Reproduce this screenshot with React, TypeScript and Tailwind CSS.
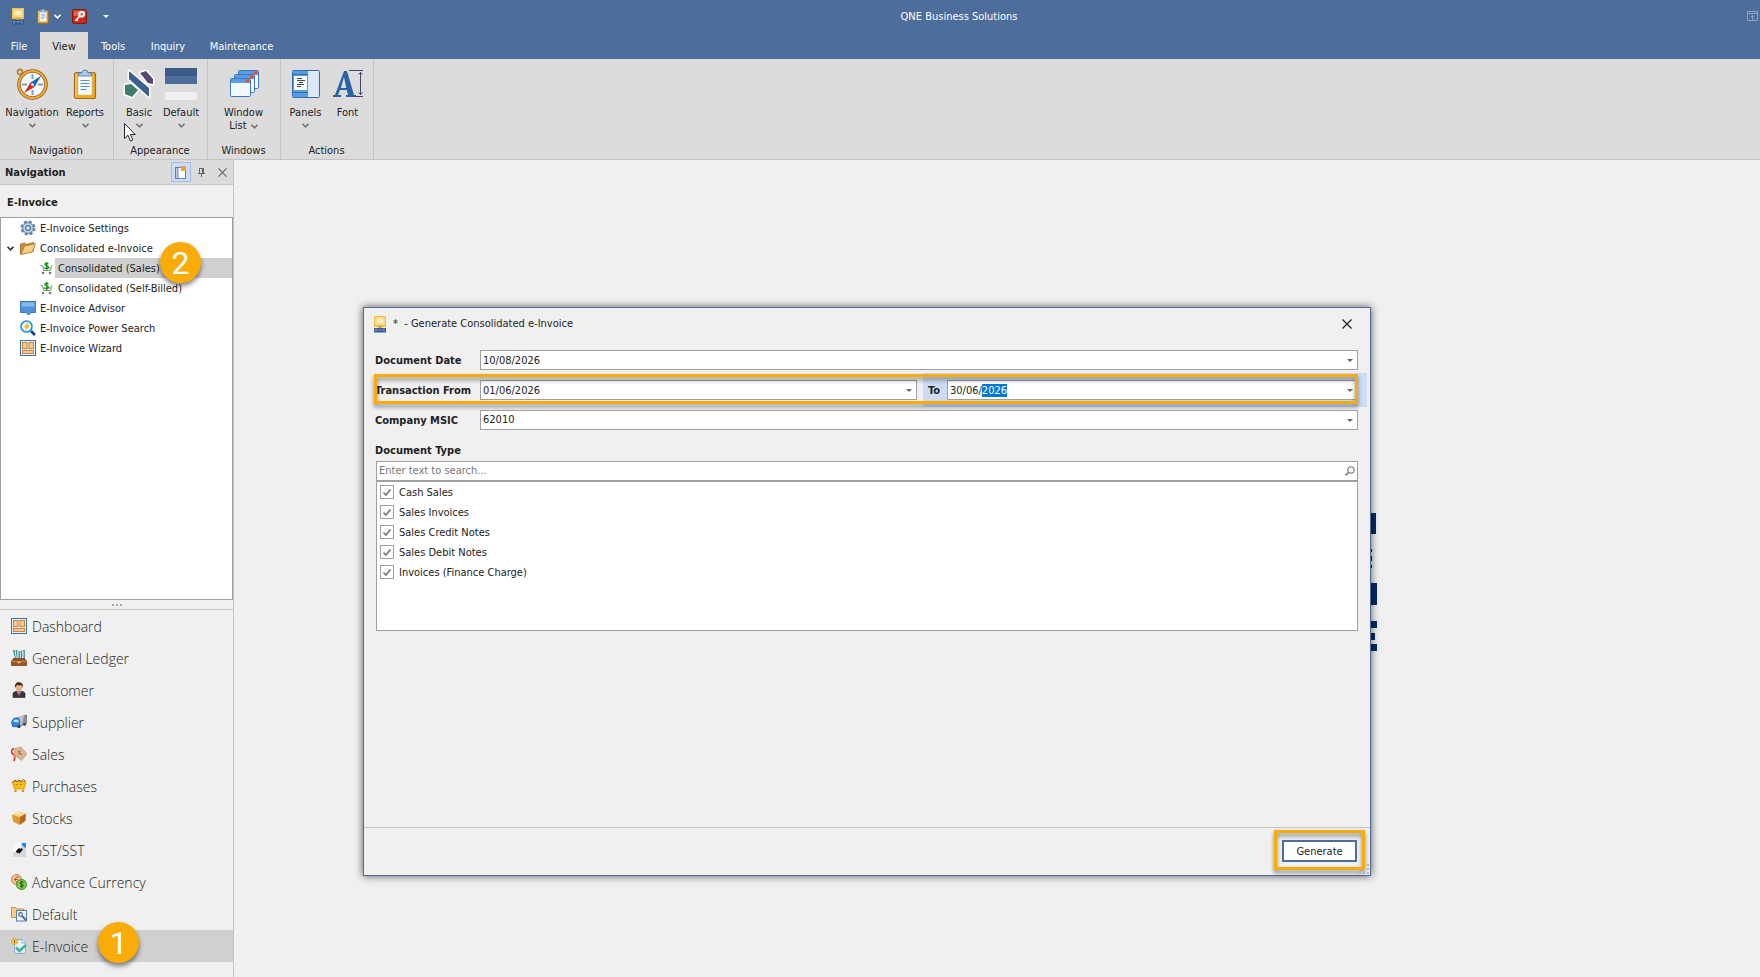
import { type FC, type ReactNode, useEffect, useRef, useState } from 'react';

interface IconProps {
  className?: string;
}

/* ---------- small glyphs ---------- */

const Chevron: FC<IconProps> = ({ className }) => (
  <svg viewBox="0 0 7 5" className={`w-[7px] h-[5px] ${className ?? ''}`} fill="none" stroke="currentColor" strokeWidth="1.6">
    <path d="M0.5 0.8 L3.5 3.8 L6.5 0.8" />
  </svg>
);

const Caret: FC<IconProps> = ({ className }) => (
  <svg viewBox="0 0 6 3" className={`w-[6px] h-[3px] ${className ?? ''}`} fill="currentColor">
    <path d="M0 0 H6 L3 3 Z" />
  </svg>
);

const CloseGlyph: FC<IconProps> = ({ className }) => (
  <svg viewBox="0 0 10 10" className={className} fill="none" stroke="currentColor" strokeWidth="1.3">
    <path d="M0.5 0.5 L9.5 9.5 M9.5 0.5 L0.5 9.5" />
  </svg>
);

const AppIcon: FC<IconProps> = ({ className }) => (
  <svg viewBox="0 0 13 17" className={`w-[13px] h-[17px] ${className ?? ''}`}>
    <rect x="0" y="0" width="12" height="11" fill="#eec04b" />
    <rect x="1" y="1" width="10" height="8" fill="#f8dc84" />
    <rect x="3" y="3" width="6" height="4" fill="#fdf0be" />
    <rect x="4.5" y="10" width="3" height="2" fill="#d59a2c" />
    <rect x="0" y="12" width="12" height="4.5" fill="#31568f" />
    <path d="M1 13h2v2H1zM5 15v-2l2 2v-2M11 13H9v2h2" fill="none" stroke="#8aa2c8" strokeWidth="0.7" />
  </svg>
);

const ClipboardIcon: FC<IconProps> = ({ className }) => (
  <svg viewBox="0 0 24 32" className={className}>
    <rect x="1.5" y="4.5" width="21" height="26" rx="2" fill="#f0a91c" stroke="#a8681a" strokeWidth="1.2" />
    <path d="M3 6v23" stroke="#ffd977" />
    <rect x="5" y="7" width="14" height="20" fill="#f7fbff" stroke="#d9c089" strokeWidth="0.6" />
    <path d="M5.5 8V5h3.500a3 3 0 0 1 6 0h3.500v3z" fill="#a9c9ec" stroke="#5d87b7" />
    <path d="M7.5 12.500h9M7.500 15.500h9M7.500 18.500h9M7.500 21.500h6" stroke="#5b8fd0" strokeWidth="1.200" />
  </svg>
);

const KeyIcon: FC = () => (
  <svg viewBox="0 0 14 14" className="size-[15px]">
    <rect x="0.500" y="0.500" width="13" height="13" rx="2" fill="#cb2a1c" stroke="#8d160d" />
    <rect x="1.500" y="1.500" width="11" height="5" fill="#e0624f" />
    <circle cx="9" cy="5" r="2.200" fill="none" stroke="#fff" strokeWidth="1.800" />
    <path d="M7.500 6.500 L3 11 M4 9.500 L5.500 11" stroke="#fff" strokeWidth="1.500" />
  </svg>
);

/* ---------- ribbon icons ---------- */

const CompassIcon: FC = () => (
  <svg viewBox="0 0 32 32" className="size-8">
    <circle cx="4" cy="4" r="2.500" fill="none" stroke="#b98136" strokeWidth="1.800" />
    <circle cx="16.500" cy="16.500" r="13.500" fill="#f3f9fd" stroke="#9a611a" strokeWidth="3.600" />
    <circle cx="16.500" cy="16.500" r="13.500" fill="none" stroke="#edaa3c" strokeWidth="2" />
    <path d="M16.500 6v5M16.500 22v5M6 16.500h5M22 16.500h5" stroke="#7ba0bd" strokeWidth="2" />
    <path d="M25 8 L18.500 19 L14.500 14.500 Z" fill="#1f5fae" />
    <path d="M8 25 L14.500 14.500 L18.500 19 Z" fill="#d8281e" />
    <circle cx="16.500" cy="16.500" r="1.500" fill="#e8eef5" />
  </svg>
);

const BasicSkinIcon: FC = () => (
  <svg viewBox="0 0 32 32" className="size-8">
    <g stroke="#fff" strokeWidth="3" strokeLinejoin="round">
      <path d="M17 5 L23 3 L30 11 L30 16 L25 15 Z" fill="#5b4678" />
      <path d="M2 17 L8 16 L15 22 L9 29 L2 26 Z" fill="#3f7d66" />
      <path d="M6 3 L26 20 L26 29 L6 11 Z" fill="#3b5f90" />
    </g>
    <path d="M17 5 L23 3 L30 11 L30 16 L25 15 Z" fill="#5b4678" />
    <path d="M2 17 L8 16 L15 22 L9 29 L2 26 Z" fill="#3f7d66" />
    <path d="M6 3 L26 20 L26 29 L6 11 Z" fill="#3b5f90" />
  </svg>
);

const DefaultSkinIcon: FC = () => (
  <svg viewBox="0 0 32 32" className="size-8">
    <rect width="32" height="8" fill="#3c5a86" />
    <rect y="8" width="32" height="8" fill="#4d6d9c" />
    <rect y="16" width="32" height="8" fill="#dcdcdc" />
    <rect y="24" width="32" height="8" fill="#f0f0f0" />
  </svg>
);

const WindowListIcon: FC = () => (
  <svg viewBox="0 0 32 32" className="size-8">
    {[
      [10, 2],
      [6, 6],
      [2, 10],
    ].map(([x, y]) => (
      <g key={x}>
        <rect x={x + 0.5} y={y + 0.5} width="20" height="18" rx="1" fill="#f3f8fd" stroke="#3c78bd" />
        <rect x={x + 1} y={y + 1} width="19" height="4" fill="#5c9ce0" />
        <rect x={x + 16} y={y + 1.5} width="3" height="2.500" fill="#e6472a" />
      </g>
    ))}
  </svg>
);

const PanelsIcon: FC = () => (
  <svg viewBox="0 0 32 32" className="size-8">
    <rect x="2.500" y="2.500" width="27" height="27" rx="1" fill="#dbe8f8" stroke="#2e6db5" />
    <rect x="3" y="3" width="15" height="26" fill="#5a9be0" />
    <path d="M3 6.500h15M3 24.500h15" stroke="#2e6db5" />
    <rect x="4" y="8" width="13" height="14" fill="#f7fbff" />
    <path d="M7 10.500h5M7 12.500h8M9 14.500h4M7 16.500h7M7 18.500h4" stroke="#3d4b5c" />
  </svg>
);

const FontIcon: FC = () => (
  <svg viewBox="0 0 32 32" className="size-8">
    <path
      d="M12 3 H15 L22 27 H24 V29 H14 V27 H16 L14.800 22 H8 L6 27 H9 V29 H1 V27 H3 Z M12 9 L8.800 20 H14.300 Z"
      fill="#2a62a3"
      fillRule="evenodd"
    />
    <path d="M17 2.500h14M22 28.500h9M28.500 4v23M26.500 6.500l2-2 2 2M26.500 24.500l2 2 2-2" fill="none" stroke="#44446b" />
  </svg>
);

/* ---------- tree and module icons, 16px grid ---------- */

const Svg16: FC<{ children: ReactNode }> = ({ children }) => (
  <svg viewBox="0 0 16 16" className="size-4 shrink-0">
    {children}
  </svg>
);

const GearIcon = () => (
  <Svg16>
    <circle cx="8" cy="8" r="6.200" fill="none" stroke="#6686a6" strokeWidth="2.600" strokeDasharray="3 1.870" />
    <circle cx="8" cy="8" r="5.400" fill="#b8d2ea" stroke="#58789a" strokeWidth="0.900" />
    <circle cx="8" cy="8" r="2.300" fill="#f2f7fb" stroke="#416b99" strokeWidth="1.300" />
  </Svg16>
);

const FolderIcon = () => (
  <Svg16>
    <path d="M0.500 14V4l4-1 2 1.500 7-2V11z" fill="#c98f3f" stroke="#96601e" strokeWidth="0.800" />
    <path d="M1 14.500L4.500 6 15.500 3.500 12.500 12z" fill="#f6cf87" stroke="#ab742a" strokeWidth="0.800" />
  </Svg16>
);

const CartIcon = () => (
  <svg viewBox="0 0 13 13" className="size-[13px] shrink-0">
    <path d="M0.500 3.500h2l1 5h7l1-4M11 4.500l1.500-1.500M3 6h8" fill="none" stroke="#8a8a8a" />
    <circle cx="3" cy="11" r="1.300" fill="#777" />
    <circle cx="10" cy="11" r="1.300" fill="#777" />
    <path d="M8.500 1.800C6.500 0.800 4.500 1.500 5 2.800s3.500 1 3.500 2.500-2.500 1.800-4 0.700M6.700 0v8" fill="none" stroke="#0d9a18" strokeWidth="1.300" />
  </svg>
);

const AdvisorIcon = () => (
  <Svg16>
    <path d="M0.500 1.500h15v11h-4.500l-2.500 2.500-2.500-2.500H0.500z" fill="#4f94d8" stroke="#3b78b5" />
    <rect x="1.500" y="2.500" width="13" height="4" fill="#88bbea" />
  </Svg16>
);

const PowerSearchIcon = () => (
  <Svg16>
    <circle cx="6.500" cy="6.500" r="5.500" fill="#f5fbff" stroke="#1595dd" strokeWidth="1.600" />
    <path d="M8.500 2L3.500 7.500h2.500L5 11l5-5.500H7.500z" fill="#f7b512" />
    <path d="M11 11l4 4" stroke="#143f96" strokeWidth="2.600" />
  </Svg16>
);

const DashboardIcon = () => (
  <Svg16>
    <rect x="0.500" y="0.500" width="15" height="15" fill="#e7eff8" stroke="#3f719f" />
    <g fill="#f6cc92" stroke="#cd813b">
      <rect x="2.500" y="2.500" width="4.500" height="6" />
      <rect x="9" y="2.500" width="4.500" height="6" />
      <rect x="2.500" y="10.500" width="11" height="3" />
    </g>
  </Svg16>
);

const LedgerIcon = () => (
  <Svg16>
    <path d="M3 1l2 8M5.500 0l0.500 9M8 1v8M10.500 0.500v8M13 0v9" stroke="#3f9296" strokeWidth="1.700" />
    <path d="M4 1l1.500 8M7 1v7M12 1v8" stroke="#d8e6ef" />
    <path d="M2 0h2v2H2z" fill="#63ad42" />
    <path d="M0.500 15.500v-4l2-3h11l2 3v4z" fill="#9b5425" stroke="#6e3714" strokeWidth="0.700" />
    <path d="M1 11.500h14" stroke="#cb844c" />
    <rect x="6.500" y="12" width="3" height="1.200" fill="#f0cf98" />
  </Svg16>
);

const CustomerIcon = () => (
  <Svg16>
    <path d="M2 15.500v-4c0-1.500 3-2.500 6-2.500s6 1 6 2.500v4z" fill="#343846" stroke="#1c1e28" strokeWidth="0.600" />
    <path d="M6 9.500l2 4 2-4z" fill="#f3f3f3" />
    <path d="M8 10v4.500" stroke="#cc2222" strokeWidth="1.300" />
    <circle cx="8" cy="5.500" r="3.200" fill="#e9b384" />
    <path d="M4 6C3.500 1 6 0 8.500 0.300S12.500 3 12 6l-1-2.500-5-0.500z" fill="#48281a" />
  </Svg16>
);

const SupplierIcon = () => (
  <Svg16>
    <path d="M5 4l10.500-3v8.500L9 12z" fill="#8b8e92" stroke="#55585c" strokeWidth="0.600" />
    <path d="M5 3.800L13 1.500 11 10 8 12z" fill="#c4c7ca" />
    <path d="M0.500 8l2.500-4 5 0.500 1 3.500-1 5-6.500-0.500z" fill="#2a83dc" stroke="#1b5aa0" strokeWidth="0.700" />
    <path d="M2 8l1.500-2.500 4 0.300v2.700z" fill="#b8e0fb" />
    <circle cx="8" cy="12.500" r="1.500" fill="#2d3138" />
    <circle cx="13.500" cy="10.500" r="1.300" fill="#2d3138" />
  </Svg16>
);

const SalesIcon = () => (
  <Svg16>
    <path d="M4 2.500l6-1.500 6 7-5.500 6.500L3.500 9z" fill="#dbb692" stroke="#b28b66" strokeWidth="0.600" />
    <path d="M7 5l4 4M9 4.500l-1 4" stroke="#8d6240" />
    <path d="M3 2.500C-0.500 4 0 7 2 8s2 4 1 7" fill="none" stroke="#dd2b1c" strokeWidth="1.700" />
    <path d="M3.500 5L3 12" stroke="#f5b0a6" />
  </Svg16>
);

const PurchasesIcon = () => (
  <Svg16>
    <path d="M1 3.500h14l-2 7.500H3.500z" fill="#fabd14" stroke="#c3830b" strokeWidth="0.700" />
    <path d="M2.500 3.500L4 2l2 1.500 2-1.500 2 1.500 2.500-2L14 3" fill="none" stroke="#8c5314" />
    <path d="M4.500 6.500h2M9 6.500h2" stroke="#b87808" />
    <circle cx="4.500" cy="13" r="1.300" fill="#d88d10" />
    <circle cx="12" cy="13" r="1.300" fill="#d88d10" />
  </Svg16>
);

const StocksIcon = () => (
  <Svg16>
    <path d="M1 4.500l7-3 7 2-6.500 3.500z" fill="#f8d687" />
    <path d="M1 4.500L8.500 7v8L2 11.500z" fill="#e19a38" />
    <path d="M8.500 7L15 3.500 14.500 11l-6 4z" fill="#b56a18" />
    <path d="M5 3l6 2" stroke="#fff1c4" />
  </Svg16>
);

const TaxIcon = () => (
  <Svg16>
    <rect x="2" y="1" width="13" height="14" fill="#d3d6db" />
    <path d="M2 1h8v5l-8 5z" fill="#f5f7f9" />
    <path d="M11 1h4v5l-2-1-2-2z" fill="#168af0" />
    <path d="M5 9l3-3 1.500 1 1-1 1.500 1.500-3.500 4-1.500-1-1 1z" fill="#0c0c0c" />
  </Svg16>
);

const CurrencyIcon = () => (
  <Svg16>
    <circle cx="5.500" cy="5.500" r="5" fill="#f3c89b" stroke="#ca7b3c" />
    <path d="M8 3.500C5.500 2 4 4 4 5.500S5.500 9 8 7.500M3 5.500h4" fill="none" stroke="#b4511e" />
    <circle cx="10.500" cy="10.500" r="5" fill="#83ca4c" stroke="#43852a" />
    <path d="M12.500 8.500c-1-1-3.500-1-3.500 0.500s3.500 1 3.500 2.500-2.500 1.500-3.500 0.500M10.700 6.800v7.400" fill="none" stroke="#205e16" />
  </Svg16>
);

const DefaultModuleIcon = () => (
  <Svg16>
    <path d="M0.500 1.500h4l1 1.500h7v8.500H0.500z" fill="#f6cf85" stroke="#c69248" />
    <rect x="5.500" y="4.500" width="10" height="10.500" fill="#e8f0fa" stroke="#5c7cab" />
    <circle cx="9.500" cy="8.500" r="1.800" fill="none" stroke="#4c6a98" strokeWidth="1.200" />
    <path d="M11 10l4.500 4.500" stroke="#4c6a98" strokeWidth="1.800" />
  </Svg16>
);

const EInvoiceIcon = () => (
  <Svg16>
    <path d="M3.500 1.500h8l3 3v11h-11z" fill="#e4edf8" stroke="#8fabd0" />
    <path d="M11 1.500v3.500h3.500" fill="#fff" stroke="#8fabd0" />
    <path d="M5 9.500l3.500 3.500 6.500-6" fill="none" stroke="#43b596" strokeWidth="2.500" />
    <circle cx="3.500" cy="3.500" r="3" fill="#f1c73c" stroke="#cc9d22" strokeWidth="0.700" />
    <path d="M3.500 2v3" stroke="#8e6911" />
  </Svg16>
);

/* ---------- ribbon ---------- */

interface RibbonItem {
  label: string;
  icon: ReactNode;
  width: string;
  dropdown?: boolean;
  secondLine?: string;
}

interface RibbonGroupData {
  caption: string;
  width: string;
  items: RibbonItem[];
}

const ribbonGroups: RibbonGroupData[] = [
  {
    caption: 'Navigation',
    width: 'w-[114px]',
    items: [
      { label: 'Navigation', icon: <CompassIcon />, width: 'w-[58px]', dropdown: true },
      { label: 'Reports', icon: <ClipboardIcon className="w-6 h-8" />, width: 'w-[48px]', dropdown: true },
    ],
  },
  {
    caption: 'Appearance',
    width: 'w-[94px]',
    items: [
      { label: 'Basic', icon: <BasicSkinIcon />, width: 'w-[42px]', dropdown: true },
      { label: 'Default', icon: <DefaultSkinIcon />, width: 'w-[42px]', dropdown: true },
    ],
  },
  {
    caption: 'Windows',
    width: 'w-[73px]',
    items: [{ label: 'Window', secondLine: 'List', icon: <WindowListIcon />, width: 'w-[60px]', dropdown: true }],
  },
  {
    caption: 'Actions',
    width: 'w-[93px]',
    items: [
      { label: 'Panels', icon: <PanelsIcon />, width: 'w-[42px]', dropdown: true },
      { label: 'Font', icon: <FontIcon />, width: 'w-[42px]' },
    ],
  },
];

const Ribbon: FC = () => (
  <div className="flex h-[101px] shrink-0 bg-[#dcdcdc] border-b border-[#c4c4c4]">
    {ribbonGroups.map((group) => (
      <section key={group.caption} className={`${group.width} flex flex-col items-center border-r border-[#c4c4c4] pr-px`}>
        <div className="flex flex-1 pt-[9px]">
          {group.items.map((item) => (
            <button key={item.label} className={`${item.width} flex flex-col items-center`}>
              {item.icon}
              <span className="mt-[5px] leading-4">{item.label}</span>
              {item.secondLine ? (
                <span className="flex items-center gap-1 leading-[10px]">
                  {item.secondLine}
                  <Chevron className="text-[#777]" />
                </span>
              ) : (
                item.dropdown && <Chevron className="mt-[2px] text-[#777]" />
              )}
            </button>
          ))}
        </div>
        <div className="h-[18px] leading-5">{group.caption}</div>
      </section>
    ))}
  </div>
);

const tabs = [
  { label: 'File', style: 'w-10 pr-[2px] text-white' },
  { label: 'View', style: 'w-12 bg-[#dcdcdc] text-[#222]' },
  { label: 'Tools', style: 'w-[50px] text-white' },
  { label: 'Inquiry', style: 'w-[60px] text-white' },
  { label: 'Maintenance', style: 'w-[87px] text-white' },
];

const TitleBar: FC = () => (
  <header className="shrink-0 bg-[#4d6d9c] text-white">
    <div className="flex h-8 items-center pl-3 pr-[2px]">
      <AppIcon />
      <button aria-label="Reports" className="ml-3 flex items-center gap-[5px]">
        <ClipboardIcon className="w-3 h-4" />
        <Chevron />
      </button>
      <button aria-label="Log off" className="ml-[11px]">
        <KeyIcon />
      </button>
      <button aria-label="Customize toolbar" className="ml-4">
        <Caret />
      </button>
      <h1 className="flex-1 pl-[62px] pt-[2px] text-center">QNE Business Solutions</h1>
      <button aria-label="Ribbon display options" className="text-[#8fa4c3]">
        <svg viewBox="0 0 11 10" className="w-[11px] h-[10px]" fill="none" stroke="currentColor">
          <path d="M0.500 0.500h10v9H0.500zM0.500 2.500h10M5.500 9V4.500M3.500 6.500l2-2 2 2" />
        </svg>
      </button>
    </div>
    <nav className="flex h-[27px]">
      {tabs.map((tab) => (
        <button key={tab.label} className={`${tab.style} pt-[3px] text-center`}>
          {tab.label}
        </button>
      ))}
    </nav>
  </header>
);

/* ---------- navigation panel ---------- */

interface TreeNode {
  label: string;
  icon: ReactNode;
  child?: boolean;
  selected?: boolean;
  expanded?: boolean;
}

const treeNodes: TreeNode[] = [
  { label: 'E-Invoice Settings', icon: <GearIcon /> },
  { label: 'Consolidated e-Invoice', icon: <FolderIcon />, expanded: true },
  { label: 'Consolidated (Sales)', icon: <CartIcon />, child: true, selected: true },
  { label: 'Consolidated (Self-Billed)', icon: <CartIcon />, child: true },
  { label: 'E-Invoice Advisor', icon: <AdvisorIcon /> },
  { label: 'E-Invoice Power Search', icon: <PowerSearchIcon /> },
  { label: 'E-Invoice Wizard', icon: <DashboardIcon /> },
];

const modules = [
  { label: 'Dashboard', icon: <DashboardIcon /> },
  { label: 'General Ledger', icon: <LedgerIcon /> },
  { label: 'Customer', icon: <CustomerIcon /> },
  { label: 'Supplier', icon: <SupplierIcon /> },
  { label: 'Sales', icon: <SalesIcon /> },
  { label: 'Purchases', icon: <PurchasesIcon /> },
  { label: 'Stocks', icon: <StocksIcon /> },
  { label: 'GST/SST', icon: <TaxIcon /> },
  { label: 'Advance Currency', icon: <CurrencyIcon /> },
  { label: 'Default', icon: <DefaultModuleIcon /> },
  { label: 'E-Invoice', icon: <EInvoiceIcon /> },
];

const StepBadge: FC<{ step: number; className: string }> = ({ step, className }) => (
  <span
    className={`pointer-events-none absolute z-10 flex size-[41px] items-center justify-center rounded-full bg-[#f9ac08] font-[Roboto] text-[32px] leading-none text-white shadow-[0_3px_5px_rgba(0,0,0,0.5)] ${className}`}
  >
    {step}
  </span>
);

const NavigationPanel: FC = () => {
  const [active, setActive] = useState('E-Invoice');

  return (
    <aside className="flex w-[234px] shrink-0 flex-col border-r border-[#c4c4c4]">
      <div className="flex h-[25px] items-center border-b border-[#c4c4c4] bg-[#dcdcdc] pl-[5px] pr-[6px]">
        <h2 className="flex-1 pt-[2px] font-bold">Navigation</h2>
        <button aria-label="Show tree" className="mr-[7px] flex h-5 w-5 items-center justify-center border border-[#a3bce8] bg-[#cfdbf5]">
          <svg viewBox="0 0 12 13" className="w-3 h-[13px]">
            <rect x="0.500" y="1.500" width="10" height="11" fill="#fff" stroke="#5c81b4" />
            <path d="M2.500 2v10" stroke="#7fa3d4" strokeWidth="2" />
            <rect x="6" y="0" width="5" height="5" fill="#eca13b" />
          </svg>
        </button>
        <button aria-label="Auto hide" className="mr-[13px] text-[#666]">
          <svg viewBox="0 0 7 9" className="w-[7px] h-[9px]" fill="none" stroke="currentColor">
            <path d="M1 0.500h5M1.500 0.500v5M4.500 0.500v5M5.500 0.500v5M0 5.500h7M3.500 5.500v3.500" />
          </svg>
        </button>
        <button aria-label="Close panel" className="text-[#666]">
          <CloseGlyph className="size-[9px]" />
        </button>
      </div>

      <h3 className="h-8 pl-[7px] font-bold leading-9">E-Invoice</h3>

      <div className="relative min-h-[150px] flex-1 border border-[#a0a0a0] bg-white">
        <ul>
          {treeNodes.map((node) => (
            <li key={node.label} className={`flex h-5 items-center ${node.child ? 'pl-[39px]' : 'pl-[6px]'}`}>
              {!node.child && (
                <span className="w-[13px]">{node.expanded && <Chevron className="text-[#333]" />}</span>
              )}
              {node.icon}
              <button
                className={`ml-[2px] h-5 pt-[2px] text-left ${node.child ? 'pl-[3px]' : 'pl-[2px]'} ${node.selected ? 'flex-1 bg-[#d0d0d0]' : ''}`}
              >
                {node.label}
              </button>
            </li>
          ))}
        </ul>
        <StepBadge step={2} className="left-[159px] top-[24px]" />
      </div>

      <div className="flex h-[10px] shrink-0 items-center justify-center gap-[2px] border-b border-[#c4c4c4]">
        <i className="size-[2px] bg-[#a8a8a8]" />
        <i className="size-[2px] bg-[#a8a8a8]" />
        <i className="size-[2px] bg-[#a8a8a8]" />
      </div>

      <ul className="relative shrink-0 pb-[15px]">
        {modules.map((item) => (
          <li key={item.label}>
            <button
              onClick={() => setActive(item.label)}
              className={`flex h-8 w-full items-center gap-[5px] pl-[11px] font-['Open_Sans',sans-serif] text-[14px] font-light ${item.label === active ? 'bg-[#d0d0d0]' : ''}`}
            >
              {item.icon}
              {item.label}
            </button>
          </li>
        ))}
        <StepBadge step={1} className="left-[98px] bottom-[14px]" />
      </ul>
    </aside>
  );
};

/* ---------- dialog ---------- */

const fieldBox = 'flex h-5 flex-1 items-center border border-[#a0a0a0] bg-white';
const labelStyle = 'pt-[2px] font-bold';
const frame = 'pointer-events-none absolute border-3 border-[#f9ac08] drop-shadow-[0_3px_2px_rgba(0,0,0,0.45)]';

const DateField: FC<{ id: string; value: string; selectYear?: boolean }> = ({ id, value, selectYear }) => {
  const inputRef = useRef<HTMLInputElement>(null);

  useEffect(() => {
    if (selectYear && inputRef.current) {
      inputRef.current.focus();
      inputRef.current.setSelectionRange(6, 10);
    }
  }, [selectYear]);

  return (
    <div className={fieldBox}>
      <input
        id={id}
        ref={inputRef}
        defaultValue={value}
        className="h-[18px] min-w-0 flex-1 pl-[2px] outline-none selection:bg-[#0078d7] selection:text-white"
      />
      <button aria-label="Open calendar" className="px-1 text-[#666]">
        <Caret />
      </button>
    </div>
  );
};

const documentTypes = ['Cash Sales', 'Sales Invoices', 'Sales Credit Notes', 'Sales Debit Notes', 'Invoices (Finance Charge)'];

const GenerateDialog: FC = () => (
  <div
    role="dialog"
    aria-labelledby="dialog-title"
    className="absolute top-[147px] bottom-[101px] left-[129px] right-[389px] flex flex-col border border-[#4d6d9c] bg-[#f0f0f0] shadow-[0_0_8px_rgba(0,0,0,0.65)]"
  >
    <div className="flex h-8 shrink-0 items-center pl-[10px] pr-[18px]">
      <AppIcon />
      <h2 id="dialog-title" className="flex-1 pl-[6px] pt-px whitespace-pre">
        {'*  - Generate Consolidated e-Invoice'}
      </h2>
      <button aria-label="Close">
        <CloseGlyph className="size-[10px]" />
      </button>
    </div>

    <form className="flex flex-1 flex-col pl-[11px] pr-3 pt-[10px]" onSubmit={(e) => e.preventDefault()}>
      <div className="flex flex-col gap-[10px]">
        <div className="flex items-center">
          <label htmlFor="doc-date" className={`w-[105px] ${labelStyle}`}>Document Date</label>
          <DateField id="doc-date" value="10/08/2026" />
        </div>
        <div className="relative flex items-center">
          <label htmlFor="date-from" className={`w-[105px] ${labelStyle}`}>Transaction From</label>
          <div className="flex flex-1 gap-[6px]">
            <DateField id="date-from" value="01/06/2026" />
            <div className="relative flex flex-1 items-center before:absolute before:-top-[7px] before:-bottom-[7px] before:left-0 before:-right-[9px] before:bg-[#cfdbf5]">
              <label htmlFor="date-to" className={`relative w-6 pl-[5px] ${labelStyle}`}>To</label>
              <div className="relative flex flex-1">
                <DateField id="date-to" value="30/06/2026" selectYear />
              </div>
            </div>
          </div>
          <div className={`${frame} -left-[1px] right-0 -top-[6px] -bottom-[4px]`} />
        </div>
        <div className="flex items-center">
          <label htmlFor="msic" className={`w-[105px] ${labelStyle}`}>Company MSIC</label>
          <div className={`relative ${fieldBox}`}>
            <select id="msic" className="h-[18px] flex-1 appearance-none pl-[2px] outline-none">
              <option>62010</option>
            </select>
            <Caret className="pointer-events-none absolute right-1 text-[#666]" />
          </div>
        </div>
      </div>

      <h3 className="mt-3 h-[19px] font-bold leading-[18px]">Document Type</h3>
      <div className="ml-[1px] flex h-5 shrink-0 items-center border border-[#a0a0a0] bg-white pr-[2px]">
        <input
          type="text"
          aria-label="Search document types"
          placeholder="Enter text to search..."
          className="min-w-0 flex-1 pl-[2px] pt-px outline-none placeholder:text-[#777]"
        />
        <svg viewBox="0 0 10 10" className="size-[10px] text-[#666]" fill="none" stroke="currentColor">
          <circle cx="6" cy="4" r="3.300" />
          <path d="M3.700 6.300L0.500 9.500" strokeWidth="1.300" />
        </svg>
      </div>
      <ul className="ml-[1px] h-[150px] overflow-auto border border-[#a0a0a0] bg-white pl-[3px]">
        {documentTypes.map((type) => (
          <li key={type}>
            <label className="flex h-5 items-center gap-[5px]">
              <span className="relative size-[14px]">
                <input type="checkbox" defaultChecked className="peer block size-[14px] appearance-none border border-[#a0a0a0] bg-white" />
                <svg
                  viewBox="0 0 14 14"
                  className="pointer-events-none absolute inset-0 hidden size-[14px] text-[#777] peer-checked:block"
                  fill="none"
                  stroke="currentColor"
                  strokeWidth="1.700"
                >
                  <path d="M3.500 7.500L6 10L10.500 4.500" />
                </svg>
              </span>
              <span className="pt-[2px]">{type}</span>
            </label>
          </li>
        ))}
      </ul>
    </form>

    <div className="relative flex h-12 shrink-0 justify-end border-t border-[#c4c4c4] pt-3 pr-[13px]">
      <div className="relative h-[22px] w-[75px]">
        <button className="h-full w-full border-2 border-[#4d6d9c] bg-white pt-[2px]">Generate</button>
        <div className={`${frame} -inset-x-2 -top-[10px] -bottom-2`} />
      </div>
      <svg viewBox="0 0 11 11" className="absolute right-0 bottom-0 size-[11px]" fill="#b5b5b5">
        <path d="M8 0h2v2H8zM4 4h2v2H4zM8 4h2v2H8zM0 8h2v2H0zM4 8h2v2H4zM8 8h2v2H8z" />
      </svg>
    </div>
  </div>
);

// Brand mark in the workspace; the dialog covers most of it
const Watermark: FC = () => (
  <svg viewBox="0 0 9 138" className="absolute top-[353px] right-[383px] h-[138px] w-[9px]" fill="#062a64">
    <path d="M0 0h8v21H0zM0 36h4v3H0zM0 43h4v5H0zM0 52h4v3H0zM0 70h9v22H0zM0 108h9v7H0zM0 120h7v7H0zM0 131h9v7H0z" />
  </svg>
);

const Pointer: FC = () => (
  <svg viewBox="0 0 12 19" className="pointer-events-none absolute left-[124px] top-[123px] h-[19px] w-3">
    <path d="M0.500 0.500v15l3.500-3.300 2.400 5.800 2.400-1-2.400-5.500h4.800z" fill="#fff" stroke="#111" strokeWidth="0.900" />
  </svg>
);

export default function App() {
  return (
    <div className="relative flex h-screen flex-col overflow-hidden bg-[#f0f0f0] font-['DejaVu_Sans_Condensed','DejaVu_Sans',sans-serif] text-[11px] text-[#222]">
      <TitleBar />
      <Ribbon />
      <div className="flex min-h-0 flex-1">
        <NavigationPanel />
        <main className="relative flex-1">
          <Watermark />
          <GenerateDialog />
        </main>
      </div>
      <Pointer />
    </div>
  );
}
